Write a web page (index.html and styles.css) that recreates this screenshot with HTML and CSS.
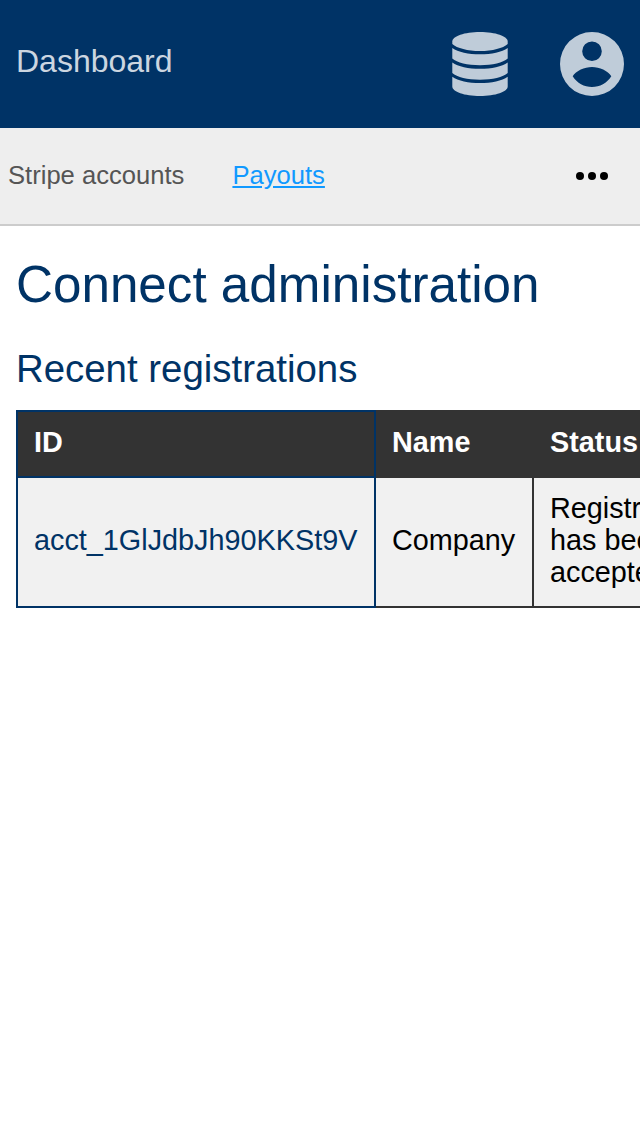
FILE: index.html
```html
<!DOCTYPE html>
<html lang="en">
<head>
<meta charset="utf-8">
<title>Connect administration</title>
<link rel="stylesheet" href="styles.css">
</head>
<body>
<header class="topbar">
  <a class="brand">Dashboard</a>
  <div class="actions">
    <svg class="icon-db" viewBox="0 0 56 64">
      <path d="M.3 9.500C.3 4.200 12.500 0 28 0S55.700 4.200 55.700 9.500V12C51 16.300 40.500 19 28 19S5 16.300 .3 12Z"/>
      <path d="M.3 16C6 20.200 16.500 22.300 28 22.300S50 20.200 55.700 16V26.500C51 30.600 40.500 33.200 28 33.200S5 30.600 .3 26.500Z"/>
      <path d="M.3 30.500C6 34.700 16.500 36.800 28 36.800S50 34.700 55.700 30.500V41C51 45.100 40.500 47.700 28 47.700S5 45.100 .3 41Z"/>
      <path d="M.3 44.800C6 49 16.500 51.100 28 51.100S50 49 55.700 44.800V54.500C55.700 59.800 43.500 64 28 64S.3 59.800 .3 54.500Z"/>
    </svg>
    <svg class="icon-user" viewBox="0 0 64 64">
      <path fill-rule="evenodd" d="M32 0A32 32 0 1 1 32 64A32 32 0 1 1 32 0ZM32 9.400A9.800 9.800 0 1 0 32 29A9.800 9.800 0 1 0 32 9.400ZM12.700 44.300C17 51.200 24.200 55 32 55S47 51.200 51.300 44.300C48 38.500 39.500 34.900 32 34.900S16 38.500 12.700 44.300Z"/>
    </svg>
  </div>
</header>
<nav class="subnav">
  <a class="tab">Stripe accounts</a>
  <a class="tab tab-active">Payouts</a>
  <svg class="more" viewBox="0 0 32 8"><circle cx="4" cy="4" r="4"/><circle cx="16" cy="4" r="4"/><circle cx="28" cy="4" r="4"/></svg>
</nav>
<main class="content">
  <h1 class="title">Connect administration</h1>
  <h2 class="subtitle">Recent registrations</h2>
  <table class="grid">
    <colgroup><col class="col-id"><col class="col-name"><col class="col-status"></colgroup>
    <tr><th class="id">ID</th><th>Name</th><th>Status</th></tr>
    <tr><td class="id">acct_1GlJdbJh90KKSt9V</td><td>Company</td><td>Registration has been accepted</td></tr>
  </table>
</main>
</body>
</html>
```
FILE: styles.css
```css
body {
  margin: 0;
  height: 1136px;
  overflow: hidden;
  background: #fff;
  color: #000;
  font-family: "Liberation Sans", Arial, sans-serif;
}
.topbar {
  box-sizing: border-box;
  display: flex;
  justify-content: space-between;
  height: 128px;
  padding: 32px 16px;
  background: #036;
}
.brand {
  color: #ccd6e0;
  font-size: 32px;
  line-height: 58px;
}
.actions {
  display: flex;
  gap: 52px;
  fill: #bfccd9;
}
.icon-db {
  width: 56px;
  height: 64px;
}
.icon-user {
  width: 64px;
  height: 64px;
}
.subnav {
  box-sizing: border-box;
  display: flex;
  align-items: center;
  gap: 48px;
  height: 98px;
  padding: 0 32px 0 8px;
  border-bottom: 2px solid #ccc;
  background: #eee;
  font-size: 25.6px;
  line-height: 30px;
}
.tab {
  padding-bottom: 2px;
  color: #555;
}
.tab-active {
  color: #19f;
  text-decoration: underline;
}
.more {
  width: 32px;
  height: 8px;
  margin-left: auto;
}
.content {
  padding: 30px 16px 0;
}
.title,
.subtitle {
  margin: 0;
  color: #036;
  font-weight: normal;
}
.title {
  font-size: 51.2px;
  line-height: 58px;
}
.subtitle {
  margin: 33px 0 19px;
  font-size: 38.4px;
  line-height: 44px;
}
.grid {
  width: 720px;
  table-layout: fixed;
  border-collapse: collapse;
  font-size: 28.8px;
  line-height: 32px;
}
.col-id {
  width: 358px;
}
.col-name {
  width: 158px;
}
.col-status {
  width: 202px;
}
.grid th,
.grid td {
  padding: 14px 16px 18px;
  border: 2px solid #333;
  text-align: left;
}
.grid th {
  background: #333;
  color: #fff;
}
.grid td {
  background: #f1f1f1;
}
.grid .id {
  border-color: #036;
}
.grid td.id {
  color: #036;
}
```
